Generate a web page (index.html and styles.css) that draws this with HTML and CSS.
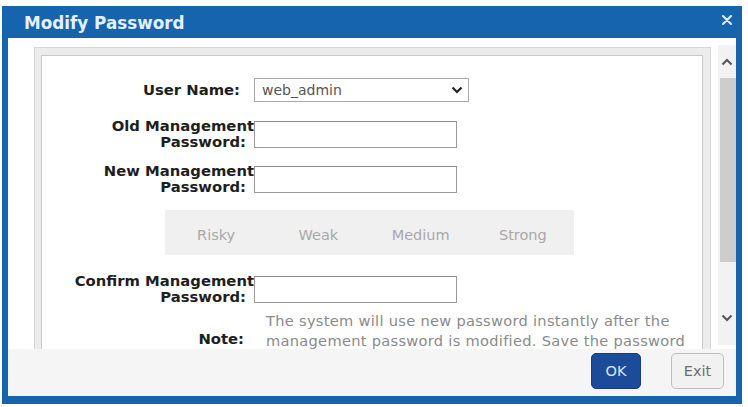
FILE: index.html
```html
<!DOCTYPE html>
<html lang="en">

<head>
    <meta charset="UTF-8">
    <title>Modify Password</title>
    <link rel="stylesheet" href="styles.css">
</head>

<body>

    <div class="dialog">
        <div class="title-bar">
            <span class="title">Modify Password</span>
            <span class="close">
                <svg width="10" height="10" viewBox="0 0 10 10"><path d="M1 1L9 9M9 1L1 9" stroke="#dbe9f6" stroke-width="2.2" stroke-linecap="round"/></svg>
            </span>
        </div>

        <div class="dialog-body">
            <div class="scroll-view">
                <div class="panel">
                    <div class="panel-inner">

                        <div class="form-row row-user">
                            <div class="label"><span class="end-user">User Name:</span></div>
                            <div class="field">
                                <div class="select">
                                    <span>web_admin</span>
                                    <svg width="12" height="8" viewBox="0 0 12 8"><path d="M1.5 1.5L6 6L10.5 1.5" fill="none" stroke="#222" stroke-width="2.2"/></svg>
                                </div>
                            </div>
                        </div>

                        <div class="form-row row-old">
                            <div class="label"><span>Old Management</span><span class="end">Password:</span></div>
                            <div class="field"><div class="input"></div></div>
                        </div>

                        <div class="form-row row-new">
                            <div class="label"><span>New Management</span><span class="end">Password:</span></div>
                            <div class="field"><div class="input"></div></div>
                        </div>

                        <div class="strength">
                            <span>Risky</span>
                            <span>Weak</span>
                            <span>Medium</span>
                            <span>Strong</span>
                        </div>

                        <div class="form-row row-confirm">
                            <div class="label"><span>Confirm Management</span><span class="end">Password:</span></div>
                            <div class="field"><div class="input"></div></div>
                        </div>

                        <div class="form-row row-note">
                            <div class="label"><span class="end-note">Note:</span></div>
                            <div class="field">
                                <p class="note">The system will use new password instantly after the management password is modified. Save the password</p>
                            </div>
                        </div>

                    </div>
                </div>
            </div>

            <!-- scroll bar on the right side of the form -->
            <div class="scrollbar">
                <div class="sb-up">
                    <svg width="12" height="8" viewBox="0 0 12 8"><path d="M1.5 6.5L6 2L10.5 6.5" fill="none" stroke="#555" stroke-width="2"/></svg>
                </div>
                <div class="sb-thumb"></div>
                <div class="sb-track"></div>
                <div class="sb-down">
                    <svg width="12" height="8" viewBox="0 0 12 8"><path d="M1.5 1.5L6 6L10.5 1.5" fill="none" stroke="#555" stroke-width="2"/></svg>
                </div>
            </div>
        </div>

        <div class="footer">
            <button class="btn btn-ok">OK</button>
            <button class="btn btn-exit">Exit</button>
        </div>
    </div>

</body>

</html>
```

FILE: styles.css
```css
body, html {
    margin: 0;
    padding: 0;
    background: #fff;
    font-family: "DejaVu Sans", Verdana, sans-serif;
}

.dialog {
    width: 740px;
    height: 398px;
    margin: 6px 0 0 2px;
    box-sizing: border-box;
    border: 6px solid #1664ae;
    border-top: 0;
    border-bottom-width: 8px;
    background: #fff;
    display: flex;
    flex-direction: column;
}

.title-bar {
    height: 32px;
    flex: none;
    background: #1664ae;
    display: flex;
    align-items: center;
    justify-content: space-between;
    padding: 0 4px 0 16px;
}

    .title-bar .title {
        color: #e4f1fb;
        font-weight: bold;
        font-size: 16.8px;
        margin-top: 1px;
    }

    .title-bar .close {
        align-self: flex-start;
        margin-top: 9px;
        line-height: 0;
    }

.dialog-body {
    flex: 1;
    min-height: 0;
    display: flex;
}

.scroll-view {
    flex: 1;
    overflow: hidden;
    padding: 9px 7px 0 26px;
}

.panel {
    border: 1px solid #d6d6d6;
    background: #ececec;
    padding: 7px 7px 0 6px;
    height: 420px;
}

.panel-inner {
    border: 1px solid #c8c8c8;
    border-bottom: 0;
    background: #fff;
    height: 100%;
    padding-top: 22px;
    box-sizing: border-box;
}

/* label on the left, control on the right */
.form-row {
    display: flex;
    align-items: center;
}

    .form-row .label {
        width: 212px;
        flex: none;
        display: flex;
        flex-direction: column;
        align-items: flex-end;
        font-weight: bold;
        font-size: 14.8px;
        line-height: 16px;
        color: #1e1e1e;
        white-space: nowrap;
    }

    .form-row .label .end {
        margin-right: 8px;
    }

    .form-row .label .end-user {
        margin-right: 14px;
    }

    .form-row .label .end-note {
        margin-right: 10px;
        margin-top: 20px;
    }

.row-old {
    margin-top: 16px;
    min-height: 32px;
}

.row-new {
    margin-top: 13px;
    min-height: 32px;
}

.row-confirm {
    margin-top: 18px;
    min-height: 32px;
}

.row-note {
    margin-top: 6px;
    align-items: flex-start;
}

.select {
    width: 215px;
    height: 24px;
    box-sizing: border-box;
    border: 1px solid #a9a9a9;
    display: flex;
    align-items: center;
    justify-content: space-between;
    padding: 0 5px 0 7px;
    font-size: 14px;
    color: #555;
}

.input {
    width: 203px;
    height: 27px;
    box-sizing: border-box;
    border: 1px solid #9a9a9a;
    border-top-color: #8a8a8a;
    background: #fff;
}

.strength {
    margin: 15px 0 0 123px;
    width: 409px;
    height: 45px;
    padding-top: 5px;
    box-sizing: border-box;
    background: #f0f0f0;
    display: grid;
    grid-template-columns: repeat(4, 1fr);
    align-items: center;
    justify-items: center;
    font-size: 14.5px;
    color: #a8a8a8;
}

.note {
    margin: 0;
    padding-left: 12px;
    width: 428px;
    font-size: 14.6px;
    letter-spacing: 0.3px;
    line-height: 20px;
    color: #8a8a8a;
}

.scrollbar {
    width: 18px;
    flex: none;
    margin-top: 7px;
    margin-bottom: 4px;
    background: #f2f2f2;
    display: flex;
    flex-direction: column;
}

.sb-up, .sb-down {
    display: flex;
    align-items: center;
    justify-content: center;
}

.sb-up {
    height: 33px;
}

.sb-thumb {
    height: 184px;
    margin-left: 2px;
    background: #cdcdcd;
}

.sb-track {
    height: 36px;
}

.sb-down {
    height: 40px;
}

.footer {
    height: 47px;
    flex: none;
    background: #f5f5f5;
    display: flex;
    justify-content: flex-end;
    align-items: flex-start;
    gap: 30px;
    padding: 4px 12px 0 0;
    box-sizing: border-box;
}

.btn {
    height: 36px;
    border-radius: 5px;
    font-family: "DejaVu Sans", Verdana, sans-serif;
    font-size: 14.5px;
    cursor: pointer;
    padding: 0;
}

.btn-ok {
    width: 50px;
    background: #1c4c99;
    border: 1px solid #163e7e;
    color: #d9e7f6;
}

.btn-exit {
    width: 53px;
    background: #f1f1f1;
    border: 1px solid #bdbdbd;
    color: #6e6e6e;
}
```
